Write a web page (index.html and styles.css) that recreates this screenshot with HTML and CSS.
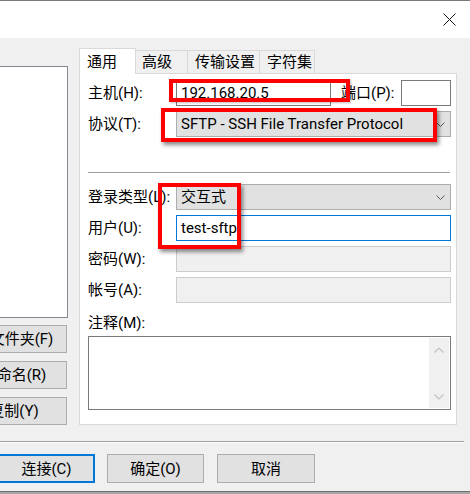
FILE: index.html
```html
<!DOCTYPE html>
<html lang="zh-CN">
<head>
<meta charset="utf-8">
<title>站点管理器</title>
<link rel="stylesheet" href="styles.css">
</head>
<body>
<div class="window">
  <div class="titlebar">
    <svg class="close" width="13" height="13" viewBox="0 0 13 13"><path d="M0.5 0.5 L12.5 12.5 M12.5 0.5 L0.5 12.5" stroke="#111" stroke-width="1" fill="none"/></svg>
  </div>
  <div class="client">
    <div class="main">
      <div class="leftpane">
        <div class="listbox"></div>
        <div class="btngrid">
          <button class="btn">新站点(N)</button>
          <button class="btn">新文件夹(F)</button>
          <button class="btn">新书签(M)</button>
          <button class="btn">重命名(R)</button>
          <button class="btn">删除(D)</button>
          <button class="btn">复制(Y)</button>
        </div>
      </div>
      <div class="notebook">
        <div class="tabs">
          <div class="tab active t1">通用</div>
          <div class="tab t2">高级</div>
          <div class="tab t3">传输设置</div>
          <div class="tab t4">字符集</div>
        </div>
        <div class="panel">
          <div class="group">
            <div class="row">
              <span class="label">主机(H):</span>
              <div class="input host">192.168.20.5</div>
              <span class="portlabel">端口(P):</span>
              <div class="input port"></div>
            </div>
            <div class="row">
              <span class="label">协议(T):</span>
              <div class="input combo"><span>SFTP - SSH File Transfer Protocol</span><svg class="chev" width="9" height="5" viewBox="0 0 9 5"><path d="M0.5 0.5 L4.5 4.5 L8.5 0.5" stroke="#5a5a5a" stroke-width="1" fill="none"/></svg></div>
            </div>
          </div>
          <div class="hr"></div>
          <div class="group">
            <div class="row">
              <span class="label">登录类型(L):</span>
              <div class="input combo"><span>交互式</span><svg class="chev" width="9" height="5" viewBox="0 0 9 5"><path d="M0.5 0.5 L4.5 4.5 L8.5 0.5" stroke="#5a5a5a" stroke-width="1" fill="none"/></svg></div>
            </div>
            <div class="row">
              <span class="label">用户(U):</span>
              <div class="input focus"><span>test-sftp</span><span class="caret"></span></div>
            </div>
            <div class="row">
              <span class="label">密码(W):</span>
              <div class="input disabled"></div>
            </div>
            <div class="row">
              <span class="label">帐号(A):</span>
              <div class="input disabled"></div>
            </div>
          </div>
          <div class="noteslabel">注释(M):</div>
          <div class="notes">
            <div class="vscroll">
              <svg width="10" height="6" viewBox="0 0 10 6"><path d="M0.5 5.5 L5 1 L9.5 5.5" stroke="#c2c2c2" stroke-width="1.2" fill="none"/></svg>
              <svg width="10" height="6" viewBox="0 0 10 6"><path d="M0.5 0.5 L5 5 L9.5 0.5" stroke="#c2c2c2" stroke-width="1.2" fill="none"/></svg>
            </div>
          </div>
        </div>
      </div>
    </div>
    <div class="sep"></div>
    <div class="footer">
      <button class="fbtn default">连接(C)</button>
      <button class="fbtn">确定(O)</button>
      <button class="fbtn cancel">取消</button>
    </div>
    <div class="bottomedge"></div>
  </div>
  <div class="mark m1"></div>
  <div class="mark m2"></div>
  <div class="mark m3"></div>
</div>
</body>
</html>
```
FILE: styles.css
```css
* { box-sizing: border-box; }
html, body { margin: 0; padding: 0; }
body {
  width: 470px;
  height: 494px;
  overflow: hidden;
  background: #f0f0f0;
  font-family: Roboto, "Noto Sans CJK SC", sans-serif;
  font-size: 15px;
  line-height: 18px;
  color: #000;
}
.window {
  position: relative;
  width: 470px;
  height: 494px;
  overflow: hidden;
  background: #f0f0f0;
  display: flex;
  flex-direction: column;
}
.titlebar {
  height: 38px;
  flex: none;
  background: #fff;
  border-top: 1px solid #7a7a7a;
  display: flex;
  align-items: center;
  justify-content: flex-end;
  padding-right: 14px;
}
.close { display: block; }
.client {
  flex: 1;
  display: flex;
  flex-direction: column;
  padding-top: 10px;
}
.main {
  display: flex;
  height: 377px;
  flex: none;
}
.leftpane {
  width: 221px;
  margin-left: -153px;
  flex: none;
  padding-top: 18px;
  display: flex;
  flex-direction: column;
}
.listbox {
  height: 256px;
  background: #fff;
  border: 1px solid #828790;
}
.btngrid {
  margin-top: 7px;
  display: grid;
  grid-template-columns: 106px 106px;
  column-gap: 8px;
  row-gap: 8px;
}
.btn, .fbtn {
  height: 28px;
  margin: 0;
  padding: 0;
  background: #e1e1e1;
  border: 1px solid #adadad;
  font: inherit;
  color: #000;
  white-space: nowrap;
  text-align: center;
}
.notebook {
  margin-left: 11px;
  width: 378px;
  flex: none;
  display: flex;
  flex-direction: column;
}
.tabs {
  display: flex;
  align-items: flex-end;
  height: 25px;
  position: relative;
  z-index: 1;
}
.tab {
  height: 23px;
  border: 1px solid #d9d9d9;
  border-bottom: none;
  background: #f0f0f0;
  padding-left: 6px;
  display: flex;
  align-items: center;
  margin-left: -1px;
  white-space: nowrap;
}
.tab.active {
  height: 26px;
  background: #fff;
  margin-bottom: -1px;
  margin-left: 0;
  position: relative;
  z-index: 2;
  padding-left: 7px;
}
.t1 { width: 57px; }
.t2 { width: 53px; }
.t3 { width: 73px; padding-left: 7px; }
.t4 { width: 56px; padding-left: 7px; }
.panel {
  height: 352px;
  background: #fff;
  border: 1px solid #d9d9d9;
  padding: 6px 5px 14px 8px;
  display: flex;
  flex-direction: column;
}
.group {
  display: flex;
  flex-direction: column;
  gap: 5px;
}
.row {
  display: flex;
  align-items: center;
  height: 26px;
}
.label {
  width: 88px;
  flex: none;
  white-space: nowrap;
}
.input {
  flex: 1;
  height: 26px;
  border: 1px solid #7a7a7a;
  background: #fff;
  padding-left: 4px;
  display: flex;
  align-items: center;
  white-space: nowrap;
  overflow: hidden;
}
.input.host { flex: none; width: 155px; }
.portlabel {
  flex: 1;
  padding-left: 10px;
  white-space: nowrap;
}
.input.port { flex: none; width: 50px; }
.input.combo {
  background: #e1e1e1;
  border-color: #adadad;
  justify-content: space-between;
  padding-right: 5px;
}
.chev { display: block; flex: none; }
.input.focus { border-color: #0078d7; }
.input.disabled {
  background: #f0f0f0;
  border-color: #cccccc;
}
.caret {
  display: inline-block;
  width: 1px;
  height: 18px;
  background: #000;
  margin-left: 0;
}
.hr {
  height: 1px;
  background: #a0a0a0;
  margin: 35px 1px 11px 0;
  flex: none;
}
.noteslabel {
  margin-top: 10px;
  height: 20px;
  line-height: 20px;
}
.notes {
  margin-top: 3px;
  height: 74px;
  border: 1px solid #7a7a7a;
  background: #fff;
  padding: 1px;
  display: flex;
  justify-content: flex-end;
}
.vscroll {
  width: 20px;
  background: #f0f0f0;
  display: flex;
  flex-direction: column;
  justify-content: space-between;
  align-items: center;
  padding: 9px 0 8px;
}
.vscroll svg { display: block; }
.sep {
  flex: none;
  width: 464px;
  height: 2px;
  border-top: 1px solid #a0a0a0;
  border-bottom: 1px solid #ffffff;
  margin-top: 16px;
}
.footer {
  flex: none;
  display: flex;
  gap: 12px;
  margin-top: 11px;
  margin-left: -2px;
}
.fbtn {
  width: 97px;
  height: 29px;
}
.fbtn.default { border: 2px solid #0078d7; }
.fbtn.cancel { width: 98px; margin-left: 1px; }
.bottomedge {
  flex: none;
  margin-top: 8px;
  height: 3px;
  border-top: 1px solid #707070;
  background: #a6a6a6;
}
.mark {
  position: absolute;
  border: 4px solid #ff0000;
  z-index: 5;
}
.m1 { left: 169px; top: 79px; width: 181px; height: 23px; box-shadow: 1px 1px 2px rgba(0,0,0,0.25); }
.m2 { left: 161px; top: 108px; width: 276px; height: 34px; box-shadow: 2px 3px 4px rgba(0,0,0,0.45); }
.m3 { left: 158px; top: 183px; width: 83px; height: 66px; box-shadow: 2px 3px 4px rgba(0,0,0,0.45); }
```
